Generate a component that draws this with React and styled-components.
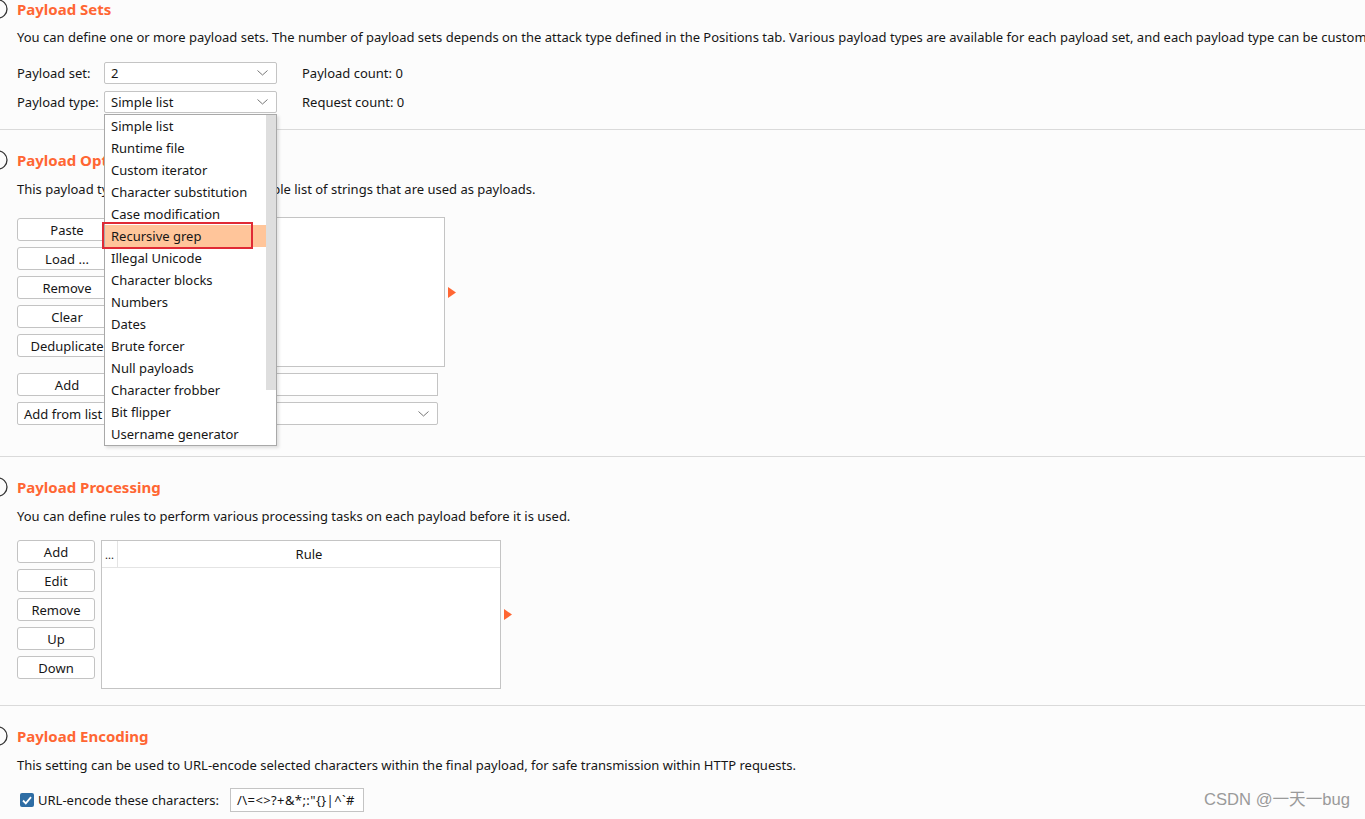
import React from 'react';
import styled, { createGlobalStyle } from 'styled-components';

const Global = createGlobalStyle`
  html, body { margin: 0; padding: 0; background: #fcfcfc; }
  body { font-family: "Noto Sans", "Open Sans", sans-serif; font-size: 13px; color: #161616; overflow: hidden; }
`;

const Page = styled.div`
  width: 1365px;
  height: 819px;
  position: relative;
  overflow: hidden;
  background: #fcfcfc;
`;

const Section = styled.section`
  padding: ${p => p.$top || 0}px 0 ${p => p.$bottom || 15}px 17px;
  border-bottom: ${p => (p.$last ? 'none' : '1px solid #dadada')};
`;

const Heading = styled.div`
  display: flex;
  align-items: center;
  gap: 9px;
  margin-left: -29px;
  height: 18px;
`;

const Title = styled.h2`
  margin: 0;
  font-size: 15px;
  font-weight: 700;
  color: #ff6633;
  line-height: 18px;
`;

const Desc = styled.p`
  margin: ${p => p.$mt || 11}px 0 0;
  line-height: 18px;
  white-space: nowrap;
`;

const Row = styled.div`
  display: flex;
  align-items: center;
  height: 22px;
  margin-top: ${p => p.$mt || 0}px;
`;

const Label = styled.span`
  width: 87px;
`;

const SelectBox = styled.div`
  position: relative;
  width: ${p => p.$w || 173}px;
  height: ${p => p.$h || 22}px;
  box-sizing: border-box;
  border: 1px solid #c4c4c4;
  border-radius: 2px;
  background: #fff;
  display: flex;
  align-items: center;
  padding-left: 6px;
`;

const Chevron = styled.svg`
  position: absolute;
  right: 8px;
  top: 50%;
  margin-top: -3px;
`;

const Count = styled.span`
  margin-left: 25px;
`;

const Menu = styled.div`
  position: absolute;
  left: -1px;
  top: 22px;
  width: 173px;
  height: 332px;
  box-sizing: border-box;
  border: 1px solid #a9a9a9;
  background: #fff;
  box-shadow: 2px 2px 3px rgba(0, 0, 0, 0.12);
  z-index: 10;
  display: flex;
`;

const MenuList = styled.ul`
  list-style: none;
  margin: 0;
  padding: 0;
  flex: 1;
`;

const MenuItem = styled.li`
  height: 22px;
  line-height: 22px;
  padding-left: 6px;
  background: ${p => (p.$active ? '#ffc59a' : 'transparent')};
  position: relative;
`;

const Marker = styled.span`
  position: absolute;
  left: -3px;
  top: -3px;
  width: 147px;
  height: 23px;
  border: 2px solid #e02a35;
`;

const Scroll = styled.div`
  width: 10px;
  display: flex;
  flex-direction: column;
`;

const Thumb = styled.div`
  height: 275px;
  background: #dedede;
`;

const Split = styled.div`
  display: flex;
  gap: ${p => p.$gap || 6}px;
  margin-top: ${p => p.$mt || 20}px;
  align-items: flex-start;
`;

const ButtonCol = styled.div`
  display: flex;
  flex-direction: column;
  gap: 6px;
`;

const Button = styled.button`
  width: ${p => p.$w || 78}px;
  height: 23px;
  box-sizing: border-box;
  border: 1px solid #c3c3c3;
  border-radius: 3px;
  background: #fff;
  font: inherit;
  color: #161616;
  padding: 0;
  white-space: nowrap;
  overflow: hidden;
`;

const ListBox = styled.div`
  width: ${p => p.$w}px;
  height: ${p => p.$h}px;
  margin-top: -1px;
  box-sizing: border-box;
  border: 1px solid #c4c4c4;
  background: #fff;
`;

const Arrow = styled.svg`
  align-self: center;
  margin-left: ${p => p.$ml}px;
`;

const Input = styled.div`
  width: ${p => p.$w}px;
  height: 23px;
  box-sizing: border-box;
  border: 1px solid #c4c4c4;
  background: #fff;
`;

const Table = styled.div`
  width: 400px;
  height: 149px;
  box-sizing: border-box;
  border: 1px solid #c4c4c4;
  background: #fff;
`;

const THead = styled.div`
  display: flex;
  height: 26px;
  border-bottom: 1px solid #e4e4e4;
`;

const Th = styled.div`
  width: ${p => (p.$w ? `${p.$w}px` : 'auto')};
  flex: ${p => (p.$w ? 'none' : 1)};
  display: flex;
  align-items: center;
  justify-content: ${p => (p.$w ? 'flex-start' : 'center')};
  padding-left: ${p => (p.$w ? 3 : 0)}px;
  box-sizing: border-box;
  border-right: ${p => (p.$w ? '1px solid #e4e4e4' : 'none')};
  font-size: ${p => (p.$w ? 11 : 13)}px;
`;

const CheckRow = styled.div`
  display: flex;
  align-items: center;
  gap: 4px;
  margin-top: 14px;
  margin-left: 3px;
`;

const Check = styled.span`
  width: 14px;
  height: 14px;
  border-radius: 2px;
  background: #2e6da4;
  display: flex;
  align-items: center;
  justify-content: center;
`;

const CharsBox = styled.div`
  margin-left: 7px;
  width: 134px;
  height: 24px;
  box-sizing: border-box;
  border: 1px solid #c4c4c4;
  background: #fff;
  display: flex;
  align-items: center;
  padding-left: 6px;
  letter-spacing: 0.4px;
`;

const Watermark = styled.div`
  position: absolute;
  right: 15px;
  bottom: 9px;
  font-family: "Liberation Sans", "Noto Sans CJK SC", sans-serif;
  font-size: 16.6px;
  color: #9a9a9a;
`;

const HelpIcon = () => (
  <svg width="20" height="20" viewBox="0 0 20 20">
    <circle cx="10" cy="10" r="9" fill="none" stroke="#333" strokeWidth="1.3" />
  </svg>
);

const Down = () => (
  <Chevron width="11" height="6" viewBox="0 0 11 6">
    <path d="M0.5 0.5 L5.5 5 L10.5 0.5" fill="none" stroke="#777" strokeWidth="1" />
  </Chevron>
);

const Tri = ({ ml }) => (
  <Arrow $ml={ml} width="8" height="11" viewBox="0 0 8 11">
    <path d="M0 0 L8 5.5 L0 11 Z" fill="#ff6633" />
  </Arrow>
);

const items = [
  'Simple list', 'Runtime file', 'Custom iterator', 'Character substitution',
  'Case modification', 'Recursive grep', 'Illegal Unicode', 'Character blocks',
  'Numbers', 'Dates', 'Brute forcer', 'Null payloads', 'Character frobber',
  'Bit flipper', 'Username generator',
];

export default function App() {
  return (
    <Page>
      <Global />
      <Section $top={0} $bottom={16}>
        <Heading><HelpIcon /><Title>Payload Sets</Title></Heading>
        <Desc $mt={10}>You can define one or more payload sets. The number of payload sets depends on the attack type defined in the Positions tab. Various payload types are available for each payload set, and each payload type can be customized in different ways.</Desc>
        <Row $mt={16}>
          <Label>Payload set:</Label>
          <SelectBox>2<Down /></SelectBox>
          <Count>Payload count: 0</Count>
        </Row>
        <Row $mt={7}>
          <Label>Payload type:</Label>
          <SelectBox>
            Simple list<Down />
            <Menu>
              <MenuList>
                {items.map(it => (
                  <MenuItem key={it} $active={it === 'Recursive grep'}>
                    {it}
                    {it === 'Recursive grep' && <Marker />}
                  </MenuItem>
                ))}
              </MenuList>
              <Scroll><Thumb /></Scroll>
            </Menu>
          </SelectBox>
          <Count>Request count: 0</Count>
        </Row>
      </Section>

      <Section $top={21} $bottom={31}>
        <Heading><HelpIcon /><Title>Payload Options [Simple list]</Title></Heading>
        <Desc>This payload type lets you configure a simple list of strings that are used as payloads.</Desc>
        <Split $mt={20} $gap={10}>
          <ButtonCol>
            <Button $w={100}>Paste</Button>
            <Button $w={100}>Load ...</Button>
            <Button $w={100}>Remove</Button>
            <Button $w={100}>Clear</Button>
            <Button $w={100}>Deduplicate</Button>
          </ButtonCol>
          <ListBox $w={318} $h={150} />
          <Tri ml={-7} />
        </Split>
        <Split $mt={6} $gap={10}>
          <Button $w={100}>Add</Button>
          <Input $w={311} />
        </Split>
        <Split $mt={6}>
          <SelectBox $w={421} $h={23}>Add from list ...<Down /></SelectBox>
        </Split>
      </Section>

      <Section $top={21} $bottom={16}>
        <Heading><HelpIcon /><Title>Payload Processing</Title></Heading>
        <Desc>You can define rules to perform various processing tasks on each payload before it is used.</Desc>
        <Split $mt={15} $gap={6}>
          <ButtonCol>
            <Button>Add</Button>
            <Button>Edit</Button>
            <Button>Remove</Button>
            <Button>Up</Button>
            <Button>Down</Button>
          </ButtonCol>
          <Table>
            <THead>
              <Th $w={16}>...</Th>
              <Th>Rule</Th>
            </THead>
          </Table>
          <Tri ml={-3} />
        </Split>
      </Section>

      <Section $top={21} $last>
        <Heading><HelpIcon /><Title>Payload Encoding</Title></Heading>
        <Desc>This setting can be used to URL-encode selected characters within the final payload, for safe transmission within HTTP requests.</Desc>
        <CheckRow>
          <Check>
            <svg width="10" height="9" viewBox="0 0 10 9">
              <path d="M1 4.5 L3.8 7.3 L9 1.2" fill="none" stroke="#fff" strokeWidth="1.8" />
            </svg>
          </Check>
          <span>URL-encode these characters:</span>
          <CharsBox>{'/\\=<>?+&*;:"{}|^`#'}</CharsBox>
        </CheckRow>
      </Section>

      <Watermark>CSDN @一天一bug</Watermark>
    </Page>
  );
}
